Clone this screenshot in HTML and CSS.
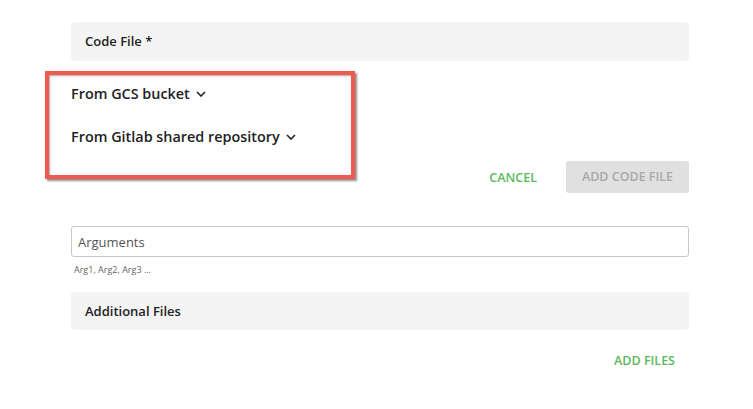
FILE: index.html
```html
<!DOCTYPE html>
<html lang="en">

<head>
    <meta charset="UTF-8">
    <meta name="viewport" content="width=device-width, initial-scale=1.0">
    <title>Code File</title>
    <link rel="stylesheet" href="styles.css">
</head>

<body>
    <div class="form">
        <div class="section-title">Code File *</div>

        <div class="sources">
            <div class="source">From GCS bucket
                <svg class="chevron" width="10" height="6" viewBox="0 0 10 6"><polyline points="1,1 5,5 9,1" /></svg>
            </div>
            <div class="source">From Gitlab shared repository
                <svg class="chevron" width="10" height="6" viewBox="0 0 10 6"><polyline points="1,1 5,5 9,1" /></svg>
            </div>
        </div>

        <div class="actions">
            <a href="#" class="link-btn">CANCEL</a>
            <span class="btn disabled">ADD CODE FILE</span>
        </div>

        <input class="field" type="text" placeholder="Arguments">
        <div class="hint">Arg1, Arg2, Arg3 ...</div>

        <div class="section-title files">Additional Files</div>

        <div class="actions add">
            <a href="#" class="link-btn">ADD FILES</a>
        </div>
    </div>
</body>

</html>
```

FILE: styles.css
```css
body {
    margin: 0;
    background: #fff;
    font-family: "Open Sans", "Liberation Sans", sans-serif;
    color: #222;
}

.form {
    width: 618px;
    padding: 22px 0 0 71px;
}

.section-title {
    height: 39px;
    line-height: 39px;
    padding-left: 14px;
    background: #f4f4f4;
    border-radius: 3px;
    font-size: 13px;
    font-weight: 600;
}

.section-title.files {
    height: 38px;
    line-height: 38px;
    margin-top: 16px;
}

/* source list + red highlight frame */
.sources {
    position: relative;
    margin-top: 10px;
    padding-top: 12px;
}

.sources::after {
    content: "";
    position: absolute;
    top: 0;
    left: -26px;
    width: 302px;
    height: 100px;
    border: 4px solid #f25a4f;
    box-shadow: 2px 2px 2px rgba(0, 0, 0, .45), inset 1px 1px 2px rgba(0, 0, 0, .35);
}

.source {
    display: flex;
    align-items: center;
    gap: 6px;
    height: 20px;
    font-size: 14.4px;
    font-weight: 600;
    color: #222;
}

.source + .source {
    margin-top: 23px;
}

.chevron {
    fill: none;
    stroke: #222;
    stroke-width: 1.6;
    margin-top: 1px;
}

.actions {
    display: flex;
    justify-content: flex-end;
    align-items: center;
    margin-top: 15px;
}

.link-btn {
    font-size: 12.5px;
    font-weight: 600;
    color: #5cb85c;
    text-decoration: none;
    margin-right: 29px;
}

.btn {
    width: 123px;
    height: 32px;
    line-height: 32px;
    text-align: center;
    border-radius: 3px;
    font-size: 12.5px;
    font-weight: 600;
}

.btn.disabled {
    background: #e0e0e0;
    color: #a9a9a9;
}

.field {
    display: block;
    box-sizing: border-box;
    width: 100%;
    height: 31px;
    margin-top: 33px;
    padding: 0 6px;
    border: 1px solid #c8c8c8;
    border-radius: 3px;
    font-family: inherit;
    font-size: 13px;
    color: #333;
}

.field::placeholder {
    color: #555;
}

.hint {
    margin-top: 7px;
    padding-left: 3px;
    line-height: 12px;
    font-size: 9px;
    color: #666;
}

.actions.add {
    margin-top: 20px;
    height: 20px;
}

.actions.add .link-btn {
    margin-right: 14px;
}
```
